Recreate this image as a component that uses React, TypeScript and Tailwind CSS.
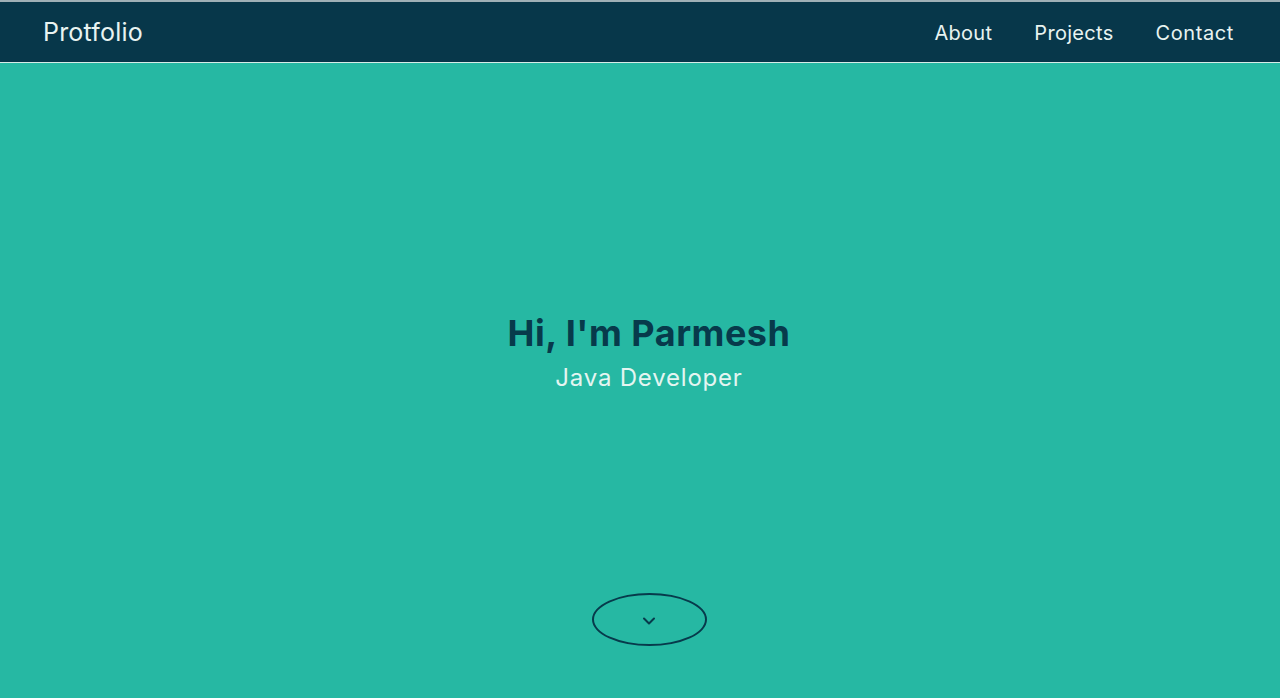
import React from "react";

export default function App() {
  return (
    <div
      className="h-[698px] w-full flex flex-col overflow-hidden bg-[#26b8a3]"
      style={{ fontFamily: "Inter, 'Open Sans', sans-serif" }}
    >
      <nav className="h-[63px] shrink-0 flex items-center justify-between bg-[#07374a] border-t-2 border-t-[#9fb0b6] border-b border-b-[#d8ece8] pl-[43px] pr-[46px]">
        <span className="text-[25px] text-[#e8f3f1] leading-none pt-[1px] tracking-[0.2px]">Protfolio</span>
        <div className="flex items-center gap-[42px] text-[20px] text-[#e8f3f1] leading-none pt-[2px] tracking-[0.3px]">
          <span>About</span>
          <span>Projects</span>
          <span className="tracking-[0.6px]">Contact</span>
        </div>
      </nav>
      <main className="flex-1 flex flex-col items-center pt-[248px] pb-[52px] pl-[18px]">
        <h1 className="text-[36px] font-bold leading-[44px] text-[#073a4b] tracking-[0.5px]">Hi, I'm Parmesh</h1>
        <p className="mt-[8px] text-[24px] leading-[29px] text-[#e4f5f1] tracking-[0.8px]">Java Developer</p>
        <div className="flex-1" />
        <button className="w-[115px] h-[53px] rounded-[50%] border-2 border-[#073a4b] flex items-center justify-center">
          <svg width="16" height="10" viewBox="0 0 16 10" fill="none" className="mt-[3px]">
            <path d="M3 2.5l5 5 5-5" stroke="#073a4b" strokeWidth="2" strokeLinecap="round" strokeLinejoin="round" />
          </svg>
        </button>
      </main>
    </div>
  );
}
